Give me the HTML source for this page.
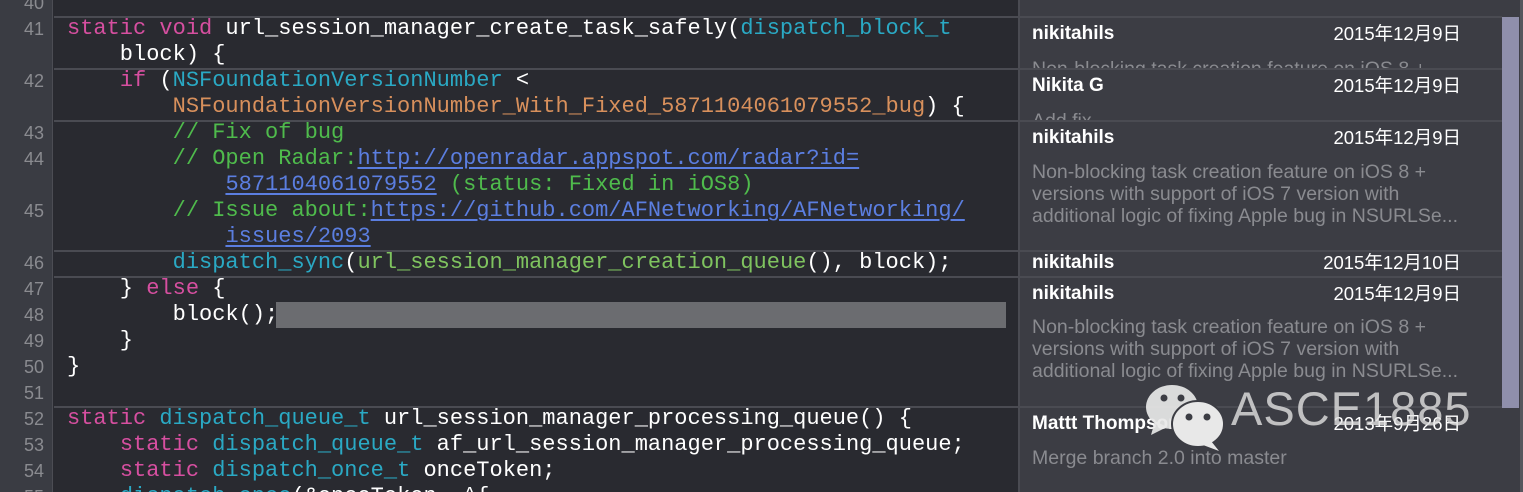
<!DOCTYPE html>
<html><head><meta charset="utf-8"><style>
*{margin:0;padding:0;box-sizing:border-box}
html{width:1523px;height:492px;overflow:hidden}
body{width:1523px;height:492px;overflow:hidden;background:#292a30;position:relative;font-family:"Liberation Sans","Noto Sans CJK SC",sans-serif}
#gut{position:absolute;left:0;top:0;width:53px;height:492px;background:#3a3c43;border-right:1px solid #4c4d54}
.ln{position:absolute;left:4px;width:40px;text-align:right;color:#8a8b90;font-size:18px;line-height:26px;height:26px}
.cl{position:absolute;left:67px;font-family:"Liberation Mono",monospace;font-size:22px;line-height:26px;height:26px;white-space:pre;color:#fff}
.k{color:#d64fa0}.t{color:#2aa9c4}.o{color:#d8905c}.c{color:#4fbb4c}.u{color:#5b7ee0;text-decoration:underline;text-underline-offset:3px}.g{color:#7fc35f}
.sep{position:absolute;left:54px;width:1448px;height:2px;background:#4a4b52}
#panel{position:absolute;left:1018px;top:0;width:484px;height:492px;background:#3c3d44;border-left:2px solid #4a4b52}
.nm{position:absolute;left:1032px;color:#fff;font-weight:bold;font-size:19px;line-height:22px}
.dt{position:absolute;right:62px;color:#fff;font-size:18.5px;line-height:22px}
.ds{position:absolute;left:1032px;color:#8a8b90;font-size:19.5px;line-height:22px;white-space:pre}
#scr{position:absolute;left:1502px;top:0;width:21px;height:492px;background:#3c3d44;border-right:3px solid #55565d}
#thumb{position:absolute;left:1502px;top:17px;width:17px;height:391px;background:#8f8fab}
</style></head><body>
<div id="gut"></div>
<div id="panel"></div>
<div id="scr"></div>
<div id="thumb"></div>

<div class="ln" style="top:-10px">40</div>
<div class="ln" style="top:16px">41</div>
<div class="ln" style="top:68px">42</div>
<div class="ln" style="top:120px">43</div>
<div class="ln" style="top:146px">44</div>
<div class="ln" style="top:198px">45</div>
<div class="ln" style="top:250px">46</div>
<div class="ln" style="top:276px">47</div>
<div class="ln" style="top:302px">48</div>
<div class="ln" style="top:328px">49</div>
<div class="ln" style="top:354px">50</div>
<div class="ln" style="top:380px">51</div>
<div class="ln" style="top:406px">52</div>
<div class="ln" style="top:432px">53</div>
<div class="ln" style="top:458px">54</div>
<div class="ln" style="top:484px">55</div>

<div class="sep" style="top:16px"></div>
<div class="sep" style="top:68px"></div>
<div class="sep" style="top:120px"></div>
<div class="sep" style="top:250px"></div>
<div class="sep" style="top:276px"></div>
<div class="sep" style="top:406px"></div>

<div style="position:absolute;left:276px;top:302px;width:730px;height:26px;background:#6b6c70"></div>

<div class="cl" style="top:16px"><span class="k">static</span> <span class="k">void</span> url_session_manager_create_task_safely(<span class="t">dispatch_block_t</span></div>
<div class="cl" style="top:42px">    block) {</div>
<div class="cl" style="top:68px">    <span class="k">if</span> (<span class="t">NSFoundationVersionNumber</span> &lt;</div>
<div class="cl" style="top:94px">        <span class="o">NSFoundationVersionNumber_With_Fixed_5871104061079552_bug</span>) {</div>
<div class="cl" style="top:120px">        <span class="c">// Fix of bug</span></div>
<div class="cl" style="top:146px">        <span class="c">// Open Radar:</span><span class="u">http://openradar.appspot.com/radar?id=</span></div>
<div class="cl" style="top:172px">            <span class="u">5871104061079552</span><span class="c"> (status: Fixed in iOS8)</span></div>
<div class="cl" style="top:198px">        <span class="c">// Issue about:</span><span class="u">https://github.com/AFNetworking/AFNetworking/</span></div>
<div class="cl" style="top:224px">            <span class="u">issues/2093</span></div>
<div class="cl" style="top:250px">        <span class="t">dispatch_sync</span>(<span class="g">url_session_manager_creation_queue</span>(), block);</div>
<div class="cl" style="top:276px">    } <span class="k">else</span> {</div>
<div class="cl" style="top:302px">        block();</div>
<div class="cl" style="top:328px">    }</div>
<div class="cl" style="top:354px">}</div>
<div class="cl" style="top:406px"><span class="k">static</span> <span class="t">dispatch_queue_t</span> url_session_manager_processing_queue() {</div>
<div class="cl" style="top:432px">    <span class="k">static</span> <span class="t">dispatch_queue_t</span> af_url_session_manager_processing_queue;</div>
<div class="cl" style="top:458px">    <span class="k">static</span> <span class="t">dispatch_once_t</span> onceToken;</div>
<div class="cl" style="top:484px">    <span class="t">dispatch_once</span>(&amp;onceToken, ^{</div>

<div style="position:absolute;left:1020px;top:18px;width:482px;height:50px;overflow:hidden">
<div class="ds" style="left:12px;top:40px">Non-blocking task creation feature on iOS 8 +</div></div>
<div style="position:absolute;left:1020px;top:70px;width:482px;height:50px;overflow:hidden">
<div class="ds" style="left:12px;top:40px">Add fix</div></div>

<div class="nm" style="top:23px">nikitahils</div><div class="dt" style="top:23px">2015年12月9日</div>
<div class="nm" style="top:75px">Nikita G</div><div class="dt" style="top:75px">2015年12月9日</div>
<div class="nm" style="top:127px">nikitahils</div><div class="dt" style="top:127px">2015年12月9日</div>
<div class="ds" style="top:161px">Non-blocking task creation feature on iOS 8 +
versions with support of iOS 7 version with
additional logic of fixing Apple bug in NSURLSe...</div>
<div class="nm" style="top:252px">nikitahils</div><div class="dt" style="top:252px">2015年12月10日</div>
<div class="nm" style="top:283px">nikitahils</div><div class="dt" style="top:283px">2015年12月9日</div>
<div class="ds" style="top:316px">Non-blocking task creation feature on iOS 8 +
versions with support of iOS 7 version with
additional logic of fixing Apple bug in NSURLSe...</div>
<div class="nm" style="top:413px">Mattt Thompson</div><div class="dt" style="top:413px">2013年9月26日</div>
<div class="ds" style="top:447px">Merge branch 2.0 into master</div>

<svg style="position:absolute;left:1145px;top:383px" width="82" height="70" viewBox="0 0 82 70">
<g fill="#e8e8e8" fill-opacity="0.92">
<ellipse cx="27" cy="24" rx="26" ry="22"/><path d="M10 38 L6 52 L22 44 Z"/>
</g>
<g fill="#e8e8e8" stroke="#3c3d44" stroke-width="2">
<ellipse cx="53" cy="41" rx="26" ry="23"/>
</g>
<path d="M66 58 L74 68 L58 62 Z" fill="#e8e8e8"/>
<g fill="#3c3d44"><circle cx="19" cy="15" r="3.5"/><circle cx="36" cy="15" r="3.5"/><circle cx="44" cy="34" r="3.5"/><circle cx="62" cy="34" r="3.5"/></g>
</svg>
<div style="position:absolute;left:1231px;top:381px;font-size:47px;line-height:56px;color:rgba(225,225,225,0.8);font-weight:300;letter-spacing:1px">ASCE1885</div>
</body></html>
